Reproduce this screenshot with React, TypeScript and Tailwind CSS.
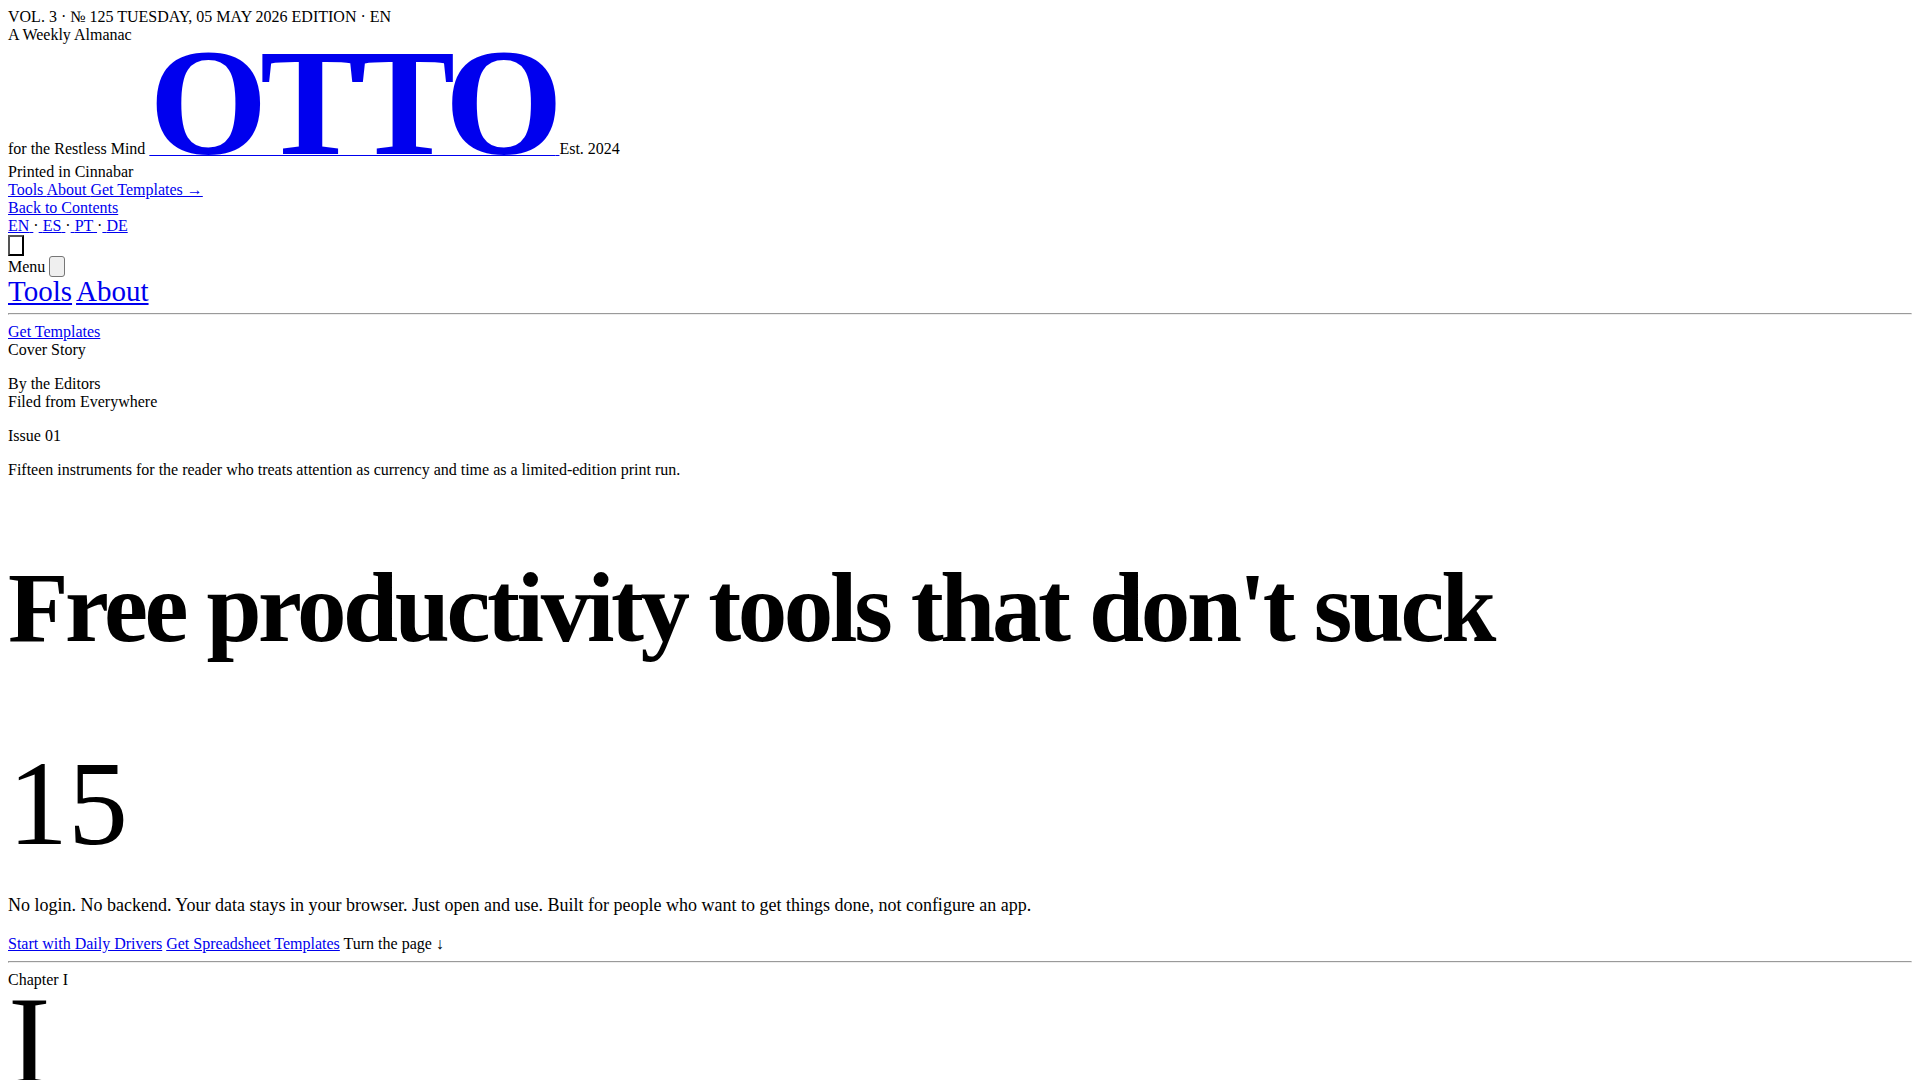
import type { ReactNode } from 'react';

const LANGUAGES = ['EN', 'ES', 'PT', 'DE'];

export default function App() {
  return (
    <div
      lang="en"
      className="bg-white p-2 font-['Liberation_Serif','Times_New_Roman',serif] text-base leading-[18px] text-black"
    >
      <Masthead />
      <MobileMenu />
      <main>
        <CoverStory />
        <Rule />
        <section>
          <div>Chapter I</div>
          <div className="text-[128px] leading-[104px]">I</div>
        </section>
      </main>
    </div>
  );
}

function Masthead() {
  return (
    <header>
      <div>VOL. 3 · № 125 TUESDAY, 05 MAY 2026 EDITION · EN</div>
      <div>
        A Weekly Almanac
        <br />
        for the Restless Mind{' '}
        <TextLink>
          <span className="text-[152px] leading-[119px] font-bold tracking-tighter [text-decoration-skip-ink:none]">
            OTTO
          </span>{' '}
        </TextLink>
        Est. 2024
        <br />
        Printed in Cinnabar
      </div>
      <nav>
        <TextLink>Tools </TextLink>
        <TextLink>About </TextLink>
        <TextLink>Get Templates →</TextLink>
      </nav>
      <div>
        <TextLink>Back to Contents</TextLink>
      </div>
      <div>
        {LANGUAGES.map((lang, i) => (
          <span key={lang}>
            {i > 0 ? '·' : null}
            <TextLink>
              {i > 0 ? ' ' : ''}
              {lang}
              {i < LANGUAGES.length - 1 ? ' ' : ''}
            </TextLink>
          </span>
        ))}
      </div>
      <button
        type="button"
        aria-label="Open menu"
        className="block h-[21px] w-4 border-2 border-black [border-style:outset]"
      />
    </header>
  );
}

function MobileMenu() {
  return (
    <div>
      <div className="flex items-center gap-1">
        <span>Menu</span>
        <button
          type="button"
          aria-label="Close menu"
          className="h-[21px] w-4 rounded-[3px] border border-[#767676] bg-[#efefef]"
        />
      </div>
      <nav className="flex gap-1 text-[29px] leading-7">
        <TextLink>Tools</TextLink>
        <TextLink>About</TextLink>
      </nav>
      <Rule />
      <TextLink>Get Templates</TextLink>
    </div>
  );
}

function CoverStory() {
  return (
    <section>
      <div>Cover Story</div>
      <p className="my-4">
        By the Editors
        <br />
        Filed from Everywhere
      </p>
      <p className="my-4">Issue 01</p>
      <p className="my-4">
        Fifteen instruments for the reader who treats attention as currency and time as a
        limited-edition print run.
      </p>
      <h1 className="my-[83px] text-[99px] leading-[92px] font-bold tracking-[-0.034em]">
        Free productivity tools that don't suck
      </h1>
      <div className="text-[120px] leading-[134px]">15</div>
      <p className="mt-6 mb-5 text-lg leading-5">
        No login. No backend. Your data stays in your browser. Just open and use. Built for people
        who want to get things done, not configure an app.
      </p>
      <div>
        <TextLink>Start with Daily Drivers</TextLink>{' '}
        <TextLink>Get Spreadsheet Templates</TextLink> <span>Turn the page ↓</span>
      </div>
    </section>
  );
}

function TextLink({ children }: { children: ReactNode }) {
  return (
    <a href="#" className="text-[#0000ee] underline">
      {children}
    </a>
  );
}

function Rule() {
  return (
    <hr className="my-2 border border-t-[#9a9a9a] border-r-[#eeeeee] border-b-[#eeeeee] border-l-[#9a9a9a]" />
  );
}
